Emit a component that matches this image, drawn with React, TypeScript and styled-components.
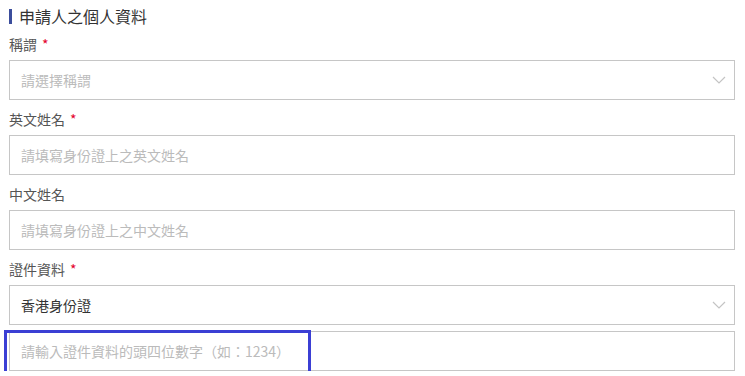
import React from 'react';
import styled, { createGlobalStyle } from 'styled-components';

const GlobalStyle = createGlobalStyle`
  body {
    margin: 0;
    background: #fff;
    font-family: "Noto Sans CJK TC", "Noto Sans", sans-serif;
  }
`;

const Section = styled.div`
  padding: 0 10px 0 9px;
  width: 745px;
  box-sizing: border-box;
`;

const Title = styled.h2`
  display: flex;
  align-items: center;
  gap: 7px;
  margin: 7px 0 0;
  font-size: 16px;
  line-height: 18px;
  font-weight: 400;
  color: #333;

  &::before {
    content: '';
    width: 3px;
    height: 15px;
    background: #3b4d9c;
  }
`;

const Label = styled.div`
  padding: 9px 0 6px;
  font-size: 14px;
  line-height: 20px;
  color: #555;
`;

const Required = styled.span`
  color: #e4002b;
  margin-left: 5px;
`;

const Box = styled.div<{ $spaced?: boolean }>`
  position: relative;
  display: flex;
  align-items: center;
  height: 40px;
  box-sizing: border-box;
  margin-top: ${p => (p.$spaced ? '6px' : '0')};
  padding: 0 30px 0 11px;
  border: 1px solid #c6c6c6;
  background: #fff;
  font-size: 14px;
  color: ${p => (p.color ? p.color : '#bbb')};
`;

const Chevron = styled.svg`
  position: absolute;
  right: 8px;
  top: 50%;
  margin-top: -4px;
`;

const Highlight = styled.div`
  position: absolute;
  left: -6px;
  top: -2px;
  width: 307px;
  height: 45px;
  box-sizing: border-box;
  border: 3px solid #3b3fd4;
  pointer-events: none;
`;

const Arrow = () => (
  <Chevron width="14" height="8" viewBox="0 0 14 8">
    <path d="M1 1l6 6 6-6" fill="none" stroke="#c4c4c4" strokeWidth="1.2" />
  </Chevron>
);

export default function App() {
  return (
    <>
      <GlobalStyle />
      <Section>
        <Title>申請人之個人資料</Title>

        <Label>
          稱謂<Required>*</Required>
        </Label>
        <Box>
          請選擇稱謂
          <Arrow />
        </Box>

        <Label>
          英文姓名<Required>*</Required>
        </Label>
        <Box>請填寫身份證上之英文姓名</Box>

        <Label>中文姓名</Label>
        <Box>請填寫身份證上之中文姓名</Box>

        <Label>
          證件資料<Required>*</Required>
        </Label>
        <Box color="#333">
          香港身份證
          <Arrow />
        </Box>
        <Box $spaced>
          請輸入證件資料的頭四位數字（如：1234）
          <Highlight />
        </Box>
      </Section>
    </>
  );
}
